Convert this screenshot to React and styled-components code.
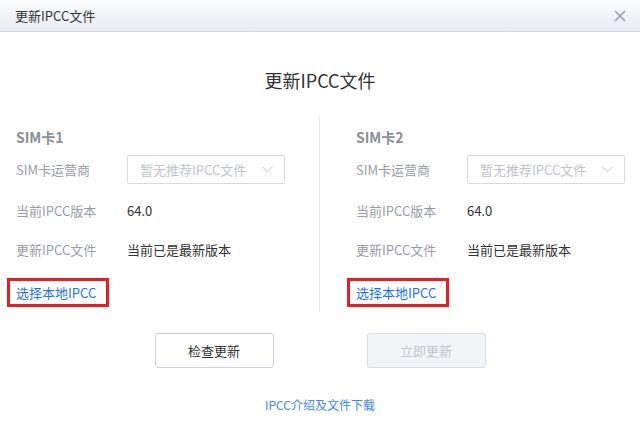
import React from 'react';
import styled, { createGlobalStyle } from 'styled-components';

const Global = createGlobalStyle`
  html, body {
    margin: 0;
    padding: 0;
    background: #fff;
  }
  body {
    font-family: "Noto Sans CJK SC", "Noto Sans", sans-serif;
    width: 640px;
    height: 439px;
    overflow: hidden;
  }
`

const Window = styled.div`
  display: flex;
  flex-direction: column;
  width: 640px;
  height: 439px;
  background: #fff;
`
const TitleBar = styled.div`
  display: flex;
  align-items: center;
  justify-content: space-between;
  height: 31px;
  padding: 0 14px 0 15px;
  background: linear-gradient(#fbfcfd, #e7ebf1);
  border-bottom: 1px solid #d3d8e0;
  flex: 0 0 auto;
`
const TitleText = styled.div`
  font-size: 13px;
  color: #333;
`
const Close = styled.div`
  display: flex;
  width: 12px;
  height: 12px;
  cursor: pointer;
`
const Heading = styled.div`
  margin-top: 36px;
  text-align: center;
  font-size: 18px;
  line-height: 24px;
  color: #333;
`
const Columns = styled.div`
  display: flex;
  margin-top: 24px;
`
const Column = styled.div`
  display: flex;
  flex-direction: column;
  width: 320px;
  box-sizing: border-box;
  padding: 11px 0 5px ${p => p.$left}px;
  border-right: ${p => (p.$divider ? '1px solid #e9e9e9' : 'none')};
`
const SectionTitle = styled.div`
  font-size: 14px;
  line-height: 20px;
  font-weight: bold;
  color: #8a8f99;
`
const Row = styled.div`
  display: flex;
  align-items: center;
  height: 29px;
  margin-top: ${p => p.$mt}px;
  font-size: 13px;
`
const Label = styled.div`
  width: 111px;
  color: #999ca5;
`
const Value = styled.div`
  color: #333;
`
const Select = styled.div`
  display: flex;
  align-items: center;
  justify-content: space-between;
  box-sizing: border-box;
  width: 158px;
  height: 29px;
  padding: 0 11px 0 12px;
  border: 1px solid #d6dae1;
  border-radius: 2px;
  color: #c0c3c9;
  font-size: 13px;
`
const LocalLink = styled.a`
  display: flex;
  align-items: center;
  align-self: flex-start;
  box-sizing: border-box;
  height: 29px;
  margin: 14px 0 0 -9px;
  padding: 0 10px 0 6px;
  border: 3px solid #ec1c24;
  font-size: 13px;
  color: #1a73f0;
  text-decoration: none;
  cursor: pointer;
`
const Buttons = styled.div`
  display: flex;
  justify-content: center;
  gap: 93px;
  margin-top: 21px;
`
const Button = styled.button`
  width: 119px;
  height: 35px;
  border: 1px solid ${p => (p.disabled ? '#d9dde4' : '#ccd2dc')};
  border-radius: 3px;
  background: ${p => (p.disabled ? '#f3f4f7' : '#fff')};
  color: ${p => (p.disabled ? '#c2c5cb' : '#333')};
  font-family: inherit;
  font-size: 13px;
  cursor: ${p => (p.disabled ? 'default' : 'pointer')};
`
const FootLink = styled.a`
  align-self: center;
  margin-top: 28px;
  font-size: 12px;
  line-height: 18px;
  color: #3b86f2;
  text-decoration: none;
  cursor: pointer;
`

const Chevron = () => (
  <svg width="11" height="7" viewBox="0 0 11 7">
    <polyline points="0.5,0.8 5.5,5.8 10.5,0.8" fill="none" stroke="#c3c6cc" strokeWidth="1" />
  </svg>
)

const SimColumn = ({ n, left, divider }) => (
  <Column $left={left} $divider={divider}>
    <SectionTitle>SIM卡{n}</SectionTitle>
    <Row $mt={8}>
      <Label>SIM卡运营商</Label>
      <Select>
        <span>暂无推荐IPCC文件</span>
        <Chevron />
      </Select>
    </Row>
    <Row $mt={12}>
      <Label>当前IPCC版本</Label>
      <Value>64.0</Value>
    </Row>
    <Row $mt={10}>
      <Label>更新IPCC文件</Label>
      <Value>当前已是最新版本</Value>
    </Row>
    <LocalLink>选择本地IPCC</LocalLink>
  </Column>
)

const App = () => {
  return (
    <Window>
      <Global />
      <TitleBar>
        <TitleText>更新IPCC文件</TitleText>
        <Close>
          <svg width="12" height="12" viewBox="0 0 12 12">
            <path d="M1 1L11 11M11 1L1 11" stroke="#9a9ea5" strokeWidth="1.6" />
          </svg>
        </Close>
      </TitleBar>
      <Heading>更新IPCC文件</Heading>
      <Columns>
        <SimColumn n={1} left={16} divider />
        <SimColumn n={2} left={36} />
      </Columns>
      <Buttons>
        <Button>检查更新</Button>
        <Button disabled>立即更新</Button>
      </Buttons>
      <FootLink>IPCC介绍及文件下载</FootLink>
    </Window>
  );
};

export default App;
